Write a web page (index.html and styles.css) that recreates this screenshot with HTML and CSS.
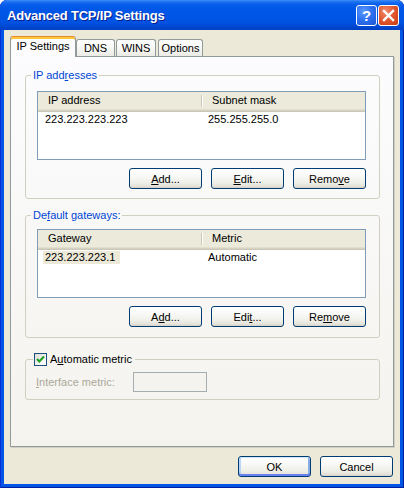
FILE: index.html
```html
<!DOCTYPE html>
<html>
<head>
<meta charset="utf-8">
<link rel="stylesheet" href="styles.css">
</head>
<body>
<div class="window">
  <div class="titlebar">
    <span class="title">Advanced TCP/IP Settings</span>
    <div class="tb-buttons">
      <span class="tb-btn help">?</span>
      <span class="tb-btn close"><svg width="19" height="19" viewBox="0 0 19 19"><path d="M5 5 L14 14 M14 5 L5 14" stroke="#fff" stroke-width="2.4" stroke-linecap="square"/></svg></span>
    </div>
  </div>
  <div class="client">
    <div class="tabs">
      <div class="tab active">IP Settings</div>
      <div class="tab t-dns">DNS</div>
      <div class="tab t-wins">WINS</div>
      <div class="tab t-opt">Options</div>
    </div>
    <div class="panel">
      <fieldset class="group g1">
        <legend>IP add<u>r</u>esses</legend>
        <div class="group-body">
          <div class="listview">
            <div class="lv-header">
              <div class="hcol c1">IP address</div>
              <div class="hsep"></div>
              <div class="hcol c2">Subnet mask</div>
            </div>
            <div class="lv-row">
              <span class="cell c1"><span class="celltext">223.223.223.223</span></span>
              <span class="cell c2">255.255.255.0</span>
            </div>
          </div>
          <div class="btn-row">
            <button class="btn"><u>A</u>dd...</button>
            <button class="btn"><u>E</u>dit...</button>
            <button class="btn">Remo<u>v</u>e</button>
          </div>
        </div>
      </fieldset>
      <fieldset class="group g2">
        <legend>De<u>f</u>ault gateways:</legend>
        <div class="group-body">
          <div class="listview">
            <div class="lv-header">
              <div class="hcol c1">Gateway</div>
              <div class="hsep"></div>
              <div class="hcol c2">Metric</div>
            </div>
            <div class="lv-row">
              <span class="cell c1"><span class="celltext selected">223.223.223.1</span></span>
              <span class="cell c2">Automatic</span>
            </div>
          </div>
          <div class="btn-row">
            <button class="btn">A<u>d</u>d...</button>
            <button class="btn">Edi<u>t</u>...</button>
            <button class="btn">Re<u>m</u>ove</button>
          </div>
        </div>
      </fieldset>
      <fieldset class="group g3">
        <legend class="check-legend">
          <span class="checkbox"><svg width="11" height="11" viewBox="0 0 11 11"><path d="M2 5 L4.3 7.4 L9 2.6" fill="none" stroke="#21A121" stroke-width="2.2"/></svg></span>
          <span class="check-label">A<u>u</u>tomatic metric</span>
        </legend>
        <div class="group-body metric-row">
          <span class="disabled-label"><u>I</u>nterface metric:</span>
          <span class="textbox"></span>
        </div>
      </fieldset>
    </div>
    <div class="dialog-buttons">
      <button class="btn default">OK</button>
      <button class="btn">Cancel</button>
    </div>
  </div>
</div>
</body>
</html>
```

FILE: styles.css
```css
html, body {
  margin: 0;
  padding: 0;
  background: #ffffff;
}

body {
  font-family: "Liberation Sans", Arial, sans-serif;
  font-size: 11px;
  color: #000;
}

.window {
  width: 404px;
  height: 488px;
  box-sizing: border-box;
  display: flex;
  flex-direction: column;
  background: #0055E5;
  border-radius: 7px 7px 0 0;
  padding: 0 4px 4px 4px;
  box-shadow: inset 1px 0 0 #0831D9, inset -1px 0 0 #001EA0, inset 0 -1px 0 #001EA0;
  overflow: hidden;
}

.titlebar {
  height: 30px;
  margin: 0 -4px;
  display: flex;
  align-items: center;
  justify-content: space-between;
  padding: 0 5px 0 7px;
  background: linear-gradient(to bottom,
    #3D8EF8 0px, #1C6FF2 2px, #0A60EC 4px, #0058E8 8px,
    #0055E5 16px, #0053E2 22px, #0049D4 26px, #0040C2 30px);
  border-radius: 7px 7px 0 0;
}

.title {
  color: #ffffff;
  font-family: "Liberation Sans", Arial, sans-serif;
  font-weight: bold;
  font-size: 13px;
  letter-spacing: -0.2px;
  text-shadow: 1px 1px 0 #0A1E8C;
  margin-top: 1px;
}

.tb-buttons {
  display: flex;
  gap: 1px;
  margin-top: 1px;
}

.tb-btn {
  width: 21px;
  height: 21px;
  box-sizing: border-box;
  border: 1px solid #ffffff;
  border-radius: 3px;
  display: flex;
  align-items: center;
  justify-content: center;
}

.help {
  background: radial-gradient(circle at 35% 30%, #5C9BFF 0%, #2F72F0 45%, #1A56D8 100%);
  color: #ffffff;
  font-weight: bold;
  font-size: 15px;
  line-height: 19px;
}

.close {
  background: radial-gradient(circle at 35% 30%, #F08C6C 0%, #E0562E 50%, #C53C13 100%);
}

.client {
  flex: 1;
  background: #ECE9D8;
  padding-top: 6px;
  display: flex;
  flex-direction: column;
}

.tabs {
  height: 20px;
  display: flex;
  align-items: flex-end;
  margin-left: 6px;
}

.tab {
  box-sizing: border-box;
  height: 17px;
  border: 1px solid #919B9C;
  border-bottom: none;
  border-radius: 3px 3px 0 0;
  background: linear-gradient(to bottom, #FFFFFF 0%, #F7F7F4 50%, #ECEBE6 100%);
  text-align: center;
  line-height: 16px;
}

.tab.active {
  position: relative;
  z-index: 1;
  width: 66px;
  height: 21px;
  margin-bottom: -1px;
  background: #FCFCFE;
  border-top: 1px solid #E68B2C;
  box-shadow: inset 0 2px 0 #FFC73C;
  line-height: 19px;
}

.t-dns { width: 39px; }
.t-wins { width: 40px; margin-left: 1px; }
.t-opt { width: 45px; margin-left: 2px; }

.panel {
  box-sizing: border-box;
  height: 391px;
  margin: 0 6px;
  border: 1px solid #919B9C;
  border-top-color: #919B9C;
  background: linear-gradient(to bottom, #FCFCFE 0%, #F4F3EE 100%);
  padding: 11px 13px 0 14px;
  box-shadow: 1px 1px 0 #D0CEBF;
}

.group {
  margin: 0;
  padding: 0;
  min-width: 0;
  border: 1px solid #D0D0BF;
  border-radius: 3px;
}

.group legend {
  padding: 0 2px;
  margin-left: 5px;
  line-height: 14px;
  color: #0046D5;
}

.group-body {
  padding: 0 13px 9px 11px;
}

.g2 { margin-top: 9px; }
.g2 .group-body { padding-bottom: 10px; }
.g2 .listview { margin-top: 7px; }

.g3 { margin-top: 14px; }

.listview {
  box-sizing: border-box;
  height: 69px;
  margin-top: 9px;
  border: 1px solid #7F9DB9;
  background: #ffffff;
}

.lv-header {
  display: flex;
  height: 20px;
  box-sizing: border-box;
  background: #EBEADB;
  box-shadow: inset 0 -1px 0 #CBC7B8, inset 0 -2px 0 #D6D2C2, inset 0 -3px 0 #E2DECD;
}

.hcol {
  line-height: 17px;
  padding-left: 10px;
}

.hcol.c1 {
  width: 163px;
  box-sizing: border-box;
}

.hsep {
  width: 1px;
  margin: 3px 0 5px 0;
  background: #CBC7B8;
  box-shadow: 1px 0 0 #ffffff;
}

.hcol.c2 {
  flex: 1;
  padding-left: 10px;
}

.lv-row {
  display: flex;
  margin-top: 1px;
  line-height: 13px;
}

.cell.c1 {
  width: 164px;
  box-sizing: border-box;
  padding-left: 5px;
}

.celltext {
  padding: 0 2px;
  display: inline-block;
}

.celltext.selected {
  background: #ECE9D8;
  padding-right: 5px;
}

.cell.c2 {
  padding-left: 6px;
}

.btn-row {
  display: flex;
  justify-content: flex-end;
  gap: 9px;
  margin-top: 8px;
}

.btn {
  width: 73px;
  height: 21px;
  box-sizing: border-box;
  padding: 0;
  margin: 0;
  font-family: "Liberation Sans", Arial, sans-serif;
  font-size: 11px;
  color: #000;
  border: 1px solid #003C74;
  border-radius: 3px;
  background: linear-gradient(to bottom, #FFFFFF 0%, #FAFAF8 30%, #F0F0EA 70%, #E5E3DA 90%, #D6D0C5 100%);
  line-height: 18px;
  text-align: center;
}

.btn.default {
  box-shadow: inset 0 1px 0 #CEE7FF, inset 0 -2px 0 #6982EE, inset 2px 0 0 #BCD4F6, inset -2px 0 0 #89ADE4;
}

.check-legend {
  display: flex;
  align-items: center;
  color: #000 !important;
  padding: 0 3px 0 1px !important;
  margin-left: 7px !important;
}

.checkbox {
  width: 13px;
  height: 13px;
  box-sizing: border-box;
  border: 1px solid #1C5180;
  background: linear-gradient(135deg, #DCDCD7 0%, #F4F4F1 60%, #FFFFFF 100%);
  display: flex;
  align-items: center;
  justify-content: center;
}

.check-label {
  margin-left: 3px;
  color: #000;
}

.metric-row {
  display: flex;
  align-items: center;
  padding: 6px 0 7px 10px;
}

.disabled-label {
  color: #ACA899;
  width: 97px;
}

.textbox {
  width: 74px;
  height: 20px;
  box-sizing: border-box;
  border: 1px solid #A5ACB2;
  background: #F4F3EE;
}

.dialog-buttons {
  display: flex;
  justify-content: flex-end;
  gap: 9px;
  margin-top: 9px;
  padding-right: 7px;
}
```
